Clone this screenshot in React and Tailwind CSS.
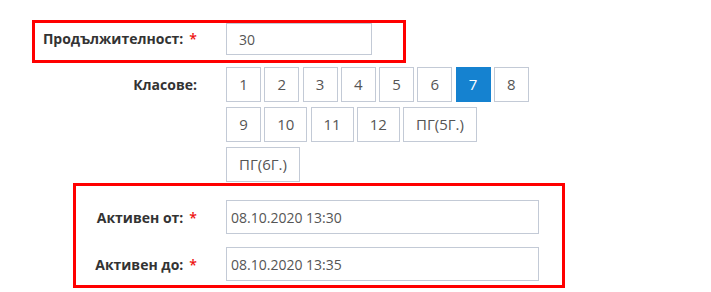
import React from "react";

const grades = [
  { t: "1", w: "w-[35px]" },
  { t: "2", w: "w-[35px]" },
  { t: "3", w: "w-[35px]" },
  { t: "4", w: "w-[35px]" },
  { t: "5", w: "w-[35px]" },
  { t: "6", w: "w-[35px]" },
  { t: "7", w: "w-[35px]", active: true },
  { t: "8", w: "w-[35px]" },
  { t: "9", w: "w-[35px]" },
  { t: "10", w: "w-[43px]" },
  { t: "11", w: "w-[43px]" },
  { t: "12", w: "w-[43px]" },
  { t: "ПГ(5Г.)", w: "w-[74px]" },
  { t: "ПГ(6Г.)", w: "w-[74px]" },
];

function Req() {
  return <span className="text-[#ee1111] font-semibold ml-[6px]">*</span>;
}

export default function App() {
  return (
    <div className="w-[711px] h-[292px] bg-white overflow-hidden pt-[20px] font-['Open_Sans',sans-serif] text-[14px] text-[#333]">
      {/* Продължителност */}
      <div className="ml-[32px] w-[374px] h-[43px] border-[3px] border-[#ff0000]">
        <div className="flex items-center h-[32px]">
          <div className="w-[162px] text-right font-bold text-[#333] leading-[20px]">
            Продължителност:<Req />
          </div>
          <div className="ml-[29px] w-[146px] h-[32px] border border-[#c3cad6] flex items-center pl-[12px] text-[#555]">
            30
          </div>
        </div>
      </div>

      {/* Класове */}
      <div className="flex mt-[4px]">
        <div className="w-[197px] h-[35px] flex items-center justify-end font-bold text-[#333]">
          Класове:
        </div>
        <div className="ml-[29px] w-[310px] flex flex-wrap gap-x-[3.25px] gap-y-[5px]">
          {grades.map((g) => (
            <div
              key={g.t}
              className={`${g.w} h-[35px] flex items-center justify-center border text-[15px] ${
                g.active
                  ? "bg-[#1582d0] border-[#1582d0] text-white"
                  : "bg-white border-[#c3cad6] text-[#555]"
              }`}
            >
              {g.t}
            </div>
          ))}
        </div>
      </div>

      {/* Активен */}
      <div className="ml-[73px] mt-[1px] w-[492px] h-[105px] border-[3px] border-[#ff0000] pt-[14px]">
        <div className="flex items-center">
          <div className="w-[121px] text-right font-bold text-[#333]">
            Активен от:<Req />
          </div>
          <div className="ml-[29px] w-[313px] h-[34px] border border-[#c3cad6] flex items-center pl-[4px] text-[#555]">
            08.10.2020 13:30
          </div>
        </div>
        <div className="flex items-center mt-[13px]">
          <div className="w-[121px] text-right font-bold text-[#333]">
            Активен до:<Req />
          </div>
          <div className="ml-[29px] w-[313px] h-[34px] border border-[#c3cad6] flex items-center pl-[4px] text-[#555]">
            08.10.2020 13:35
          </div>
        </div>
      </div>
    </div>
  );
}
